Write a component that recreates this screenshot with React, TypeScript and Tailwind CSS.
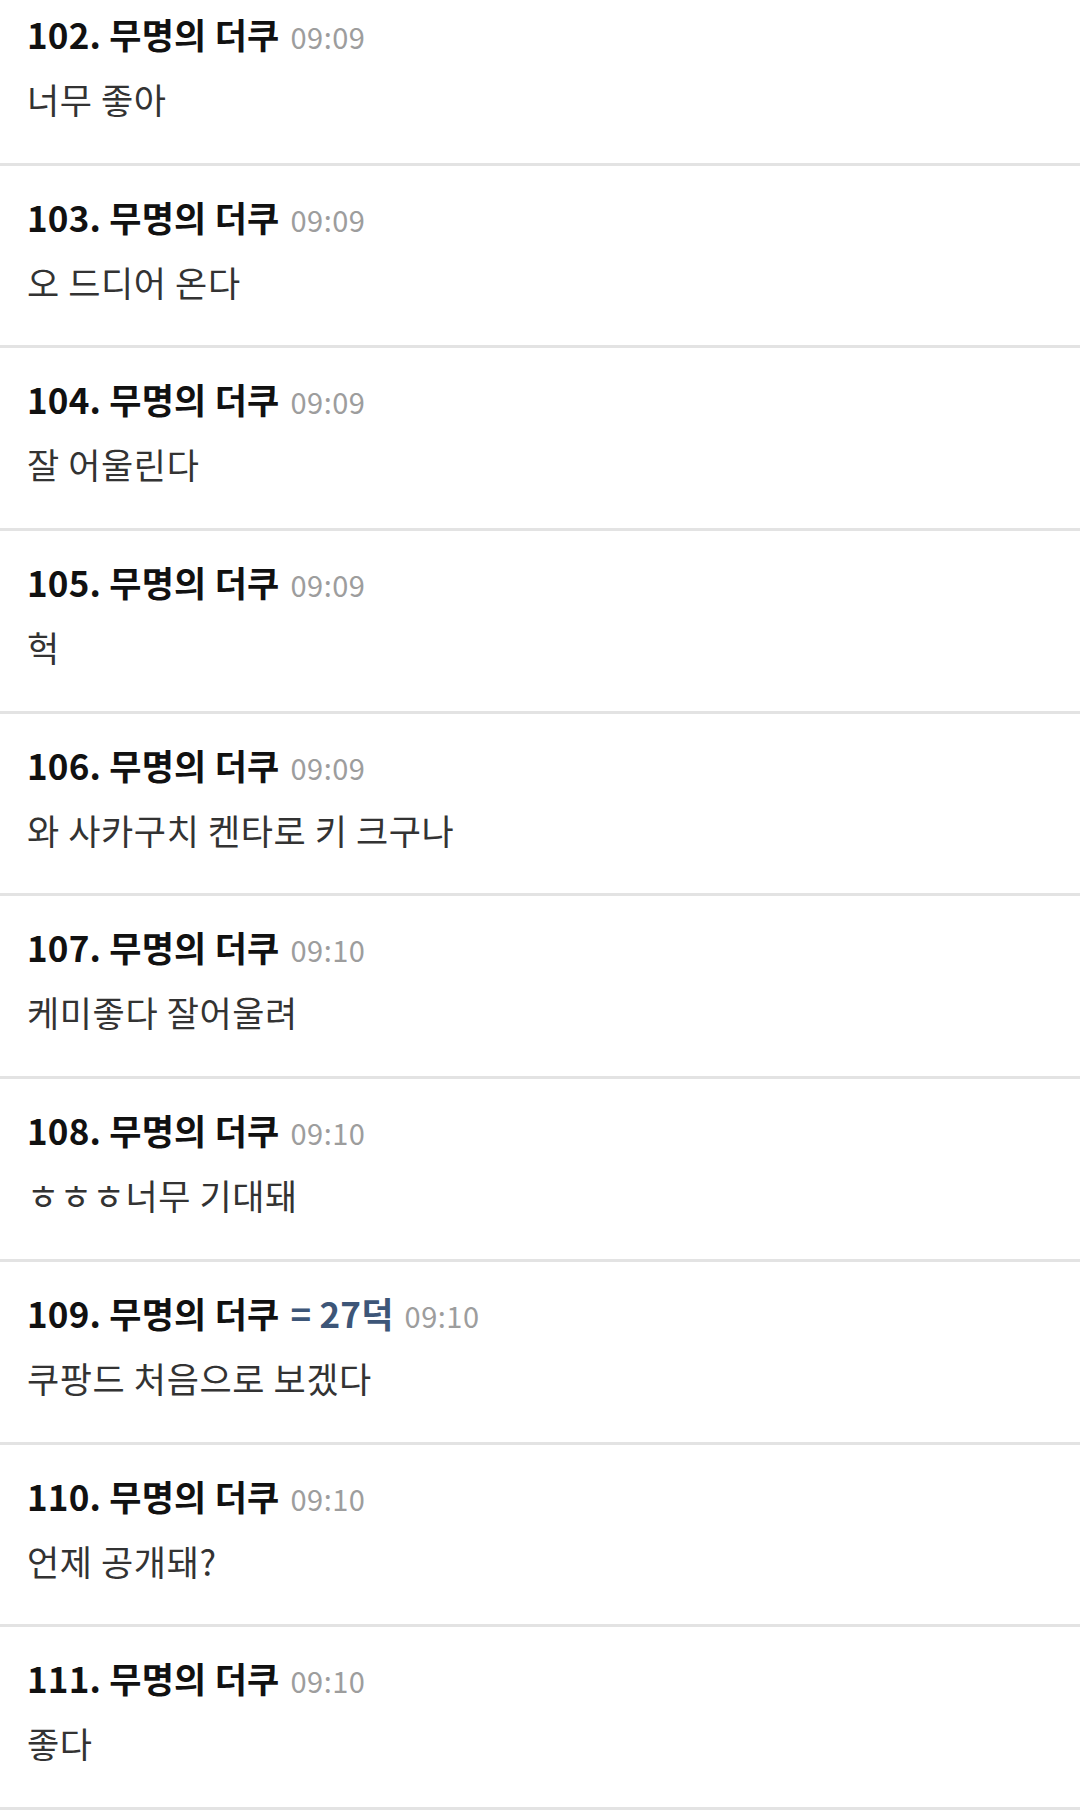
import React from "react";

type Item = { no: number; time: string; body: string; badge?: string };

const items: Item[] = [
  { no: 102, time: "09:09", body: "너무 좋아" },
  { no: 103, time: "09:09", body: "오 드디어 온다" },
  { no: 104, time: "09:09", body: "잘 어울린다" },
  { no: 105, time: "09:09", body: "헉" },
  { no: 106, time: "09:09", body: "와 사카구치 켄타로 키 크구나" },
  { no: 107, time: "09:10", body: "케미좋다 잘어울려" },
  { no: 108, time: "09:10", body: "ㅎㅎㅎ너무 기대돼" },
  { no: 109, time: "09:10", body: "쿠팡드 처음으로 보겠다", badge: "= 27덕" },
  { no: 110, time: "09:10", body: "언제 공개돼?" },
  { no: 111, time: "09:10", body: "좋다" },
];

export default function App() {
  return (
    <div
      className="w-[1080px] h-[1810px] overflow-hidden bg-white"
      style={{ fontFamily: '"Noto Sans CJK KR", "Noto Sans", sans-serif' }}
    >
      <div className="-mt-[17px]">
        {items.map((it) => (
          <div
            key={it.no}
            className="box-border h-[182.7px] border-b-[3px] border-[#e3e3e3] pl-[27px] pt-[27px] flex flex-col"
          >
            <div className="flex items-baseline leading-[48px] whitespace-nowrap">
              <span className="text-[35px] font-bold text-[#111] tracking-[0.2px]">
                {it.no}. 무명의 더쿠
              </span>
              {it.badge && (
                <span className="ml-[11px] text-[35px] font-bold text-[#3d5678] tracking-[0.2px]">
                  {it.badge}
                </span>
              )}
              <span className="ml-[11px] text-[29px] text-[#9d9d9d] tracking-[0.5px]">{it.time}</span>
            </div>
            <div className="mt-[15px] leading-[48px] text-[35px] text-[#333] tracking-[0.6px]">{it.body}</div>
          </div>
        ))}
      </div>
    </div>
  );
}
